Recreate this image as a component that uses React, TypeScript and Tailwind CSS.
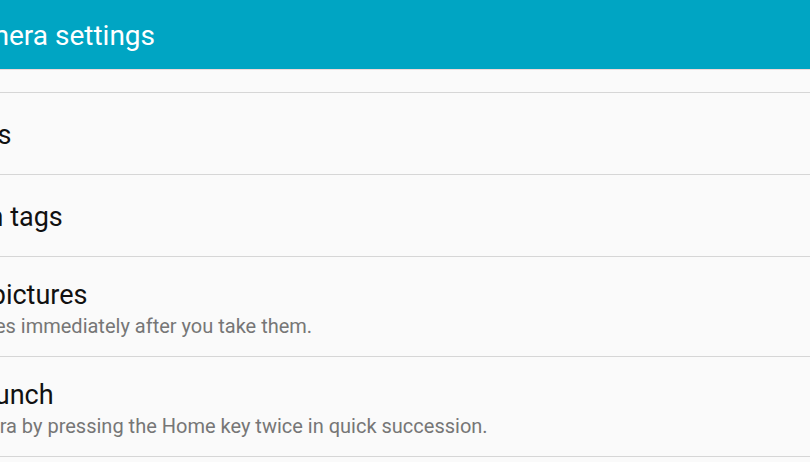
import React from 'react';

interface SettingItem {
    title: string;
    subtitle?: string;
}

const items: SettingItem[] = [
    { title: 'Grid lines' },
    { title: 'Location tags' },
    { title: 'Review pictures', subtitle: 'View pictures immediately after you take them.' },
    { title: 'Quick launch', subtitle: 'Open Camera by pressing the Home key twice in quick succession.' },
];

const SettingRow: React.FC<{ item: SettingItem }> = ({ item }) => {
    if (!item.subtitle) {
        return (
            <div className="h-[82px] border-b border-[#d6d6d6] pt-[26px]">
                <div className="ml-[-101px] text-[27px] leading-[32px] text-[#111] whitespace-nowrap">{item.title}</div>
            </div>
        );
    }
    return (
        <div className="h-[100px] border-b border-[#d6d6d6] pt-[22px]">
            <div className="ml-[-101px] text-[27px] leading-[32px] text-[#111] whitespace-nowrap">{item.title}</div>
            <div className="ml-[-104px] mt-[3px] text-[20px] leading-[24px] text-[#767676] whitespace-nowrap">{item.subtitle}</div>
        </div>
    );
};

export default function App() {
    return (
        <div className="w-[810px] h-[462px] overflow-hidden bg-[#fafafa] font-['Roboto',sans-serif]">
            <div className="h-[69px] bg-[#00a5c3] pt-[20px]">
                <div className="ml-[-49px] text-[28px] leading-[32px] text-white whitespace-nowrap">Camera settings</div>
            </div>
            <div className="h-[1px] bg-[#f1d9d9]" />
            <div className="h-[22px]" />
            <div className="border-t border-[#d6d6d6]">
                {items.map((item) => (
                    <SettingRow key={item.title} item={item} />
                ))}
            </div>
        </div>
    );
}
